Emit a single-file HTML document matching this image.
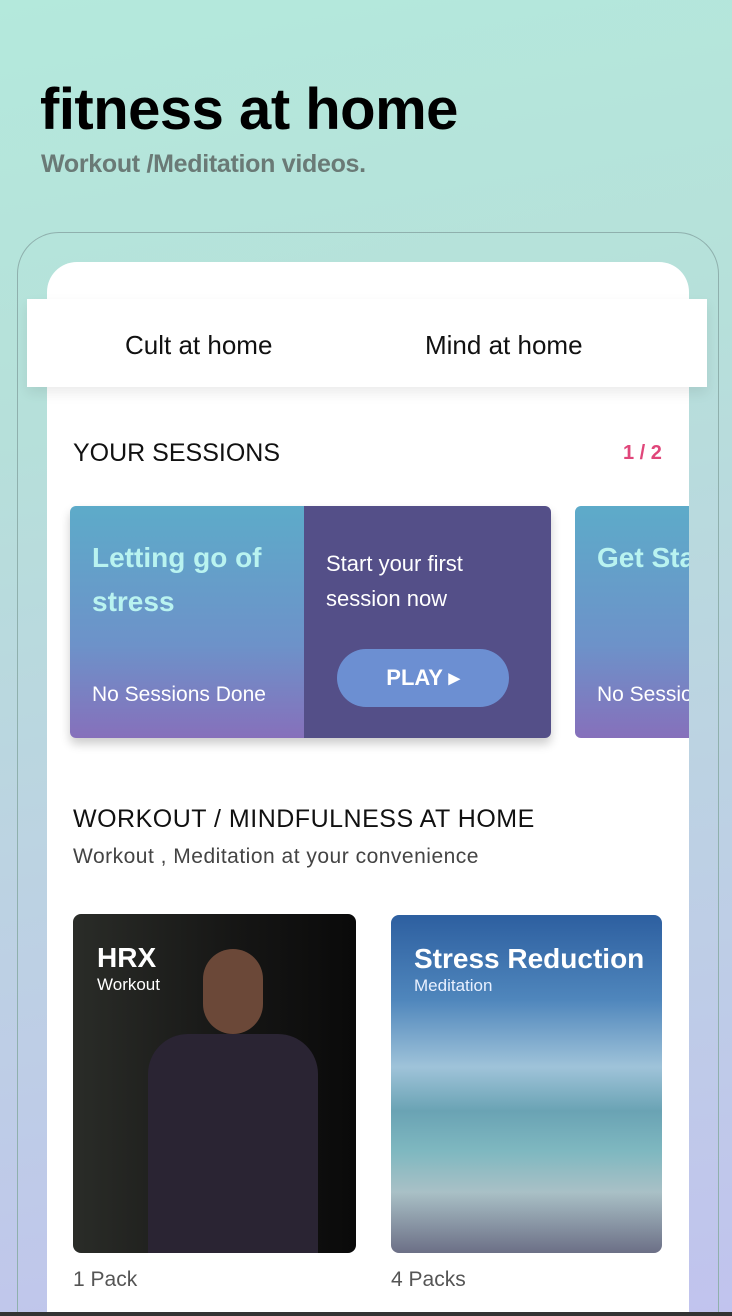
<!DOCTYPE html>
<html style="width:732px;height:1316px;overflow:hidden;background:#c1c3ee"><head><meta charset="utf-8"><style>
*{margin:0;padding:0;box-sizing:border-box}
body{width:732px;height:1316px;overflow:hidden;position:relative;font-family:"Liberation Sans",sans-serif;background:linear-gradient(170deg,#b4e9dc 0%,#b6e0da 30%,#bcd3e2 60%,#c1c3ee 100%)}
.abs{position:absolute}
h1{position:absolute;left:40px;top:76px;font-size:58px;font-weight:bold;color:#000;letter-spacing:-0.5px}
.sub{left:41px;top:150px;font-size:25px;font-weight:bold;color:#6a7a76;letter-spacing:-0.3px}
.frame{left:17px;top:232px;width:702px;height:1084px;border:1.5px solid #8fb0ad;border-bottom:none;border-radius:42px 42px 0 0}
.card{left:47px;top:262px;width:642px;height:1054px;background:#fff;border-radius:30px 30px 0 0}
.tabs{left:27px;top:299px;width:680px;height:88px;background:#fff;box-shadow:0 6px 12px rgba(0,0,0,.08)}
.tab{top:330px;font-size:26px;color:#111}
.sess{left:70px;top:506px;width:481px;height:232px;border-radius:6px;overflow:hidden;box-shadow:0 6px 10px rgba(0,0,0,.2)}
.lg{background:linear-gradient(180deg,#5dabc9,#6d92c9 60%,#8670bb)}
.bt{color:#b9f3f0;font-weight:bold;font-size:28px;line-height:44px}
.w{color:#fff}
</style></head><body>
<h1>fitness at home</h1>
<div class="abs sub">Workout /Meditation videos.</div>
<div class="abs frame"></div>
<div class="abs card"></div>
<div class="abs tabs"></div>
<div class="abs tab" style="left:125px">Cult at home</div>
<div class="abs tab" style="left:425px">Mind at home</div>
<div class="abs" style="left:73px;top:439px;font-size:25px;color:#111">YOUR SESSIONS</div>
<div class="abs" style="left:623px;top:442px;font-size:20px;font-weight:bold;color:#e0467a">1 / 2</div>
<div class="abs sess">
 <div class="abs lg" style="left:0;top:0;width:234px;height:232px"></div>
 <div class="abs" style="left:234px;top:0;width:247px;height:232px;background:#544f88"></div>
 <div class="abs bt" style="left:22px;top:30px">Letting go of<br>stress</div>
 <div class="abs w" style="left:22px;top:177px;font-size:21px">No Sessions Done</div>
 <div class="abs w" style="left:256px;top:40px;font-size:22px;line-height:35px">Start your first<br>session now</div>
 <div class="abs w" style="left:267px;top:143px;width:172px;height:58px;border-radius:29px;background:#6c8fd2;font-size:22px;font-weight:bold;text-align:center;line-height:58px">PLAY ▸</div>
</div>
<div class="abs lg" style="left:575px;top:506px;width:114px;height:232px;border-radius:6px 0 0 6px;overflow:hidden">
 <div class="abs bt" style="left:22px;top:30px;white-space:nowrap">Get Started</div>
 <div class="abs w" style="left:22px;top:177px;font-size:21px;white-space:nowrap">No Sessions</div>
</div>
<div class="abs" style="left:73px;top:805px;font-size:25px;color:#111;letter-spacing:0.5px">WORKOUT / MINDFULNESS AT HOME</div>
<div class="abs" style="left:73px;top:845px;font-size:21px;color:#444;letter-spacing:0.5px">Workout , Meditation at your convenience</div>
<div class="abs" style="left:73px;top:914px;width:283px;height:339px;border-radius:8px;overflow:hidden;background:linear-gradient(90deg,#2a2c28,#151514 60%,#0a0a0a)">
 <div class="abs" style="left:130px;top:35px;width:60px;height:85px;border-radius:30px;background:#6b4838"></div>
 <div class="abs" style="left:75px;top:120px;width:170px;height:219px;border-radius:40px 40px 0 0;background:#2a2433"></div>
 <div class="abs w" style="left:24px;top:28px;font-size:28px;font-weight:bold">HRX</div>
 <div class="abs w" style="left:24px;top:61px;font-size:17px">Workout</div>
</div>
<div class="abs" style="left:391px;top:915px;width:271px;height:338px;border-radius:8px;overflow:hidden;background:linear-gradient(180deg,#2d5fa0 0%,#4f86bc 25%,#9fc3d9 45%,#6aa3b4 58%,#7fb8c0 70%,#a9c0c6 82%,#6c6f86 100%)">
 <div class="abs w" style="left:23px;top:28px;font-size:28px;font-weight:bold;white-space:nowrap">Stress Reduction</div>
 <div class="abs" style="left:23px;top:61px;font-size:17px;color:#e8f0ff">Meditation</div>
</div>
<div class="abs" style="left:73px;top:1268px;font-size:21px;color:#555">1 Pack</div>
<div class="abs" style="left:391px;top:1268px;font-size:21px;color:#555">4 Packs</div>
<div class="abs" style="left:0;top:1312px;width:732px;height:4px;background:#333"></div>
</body></html>
